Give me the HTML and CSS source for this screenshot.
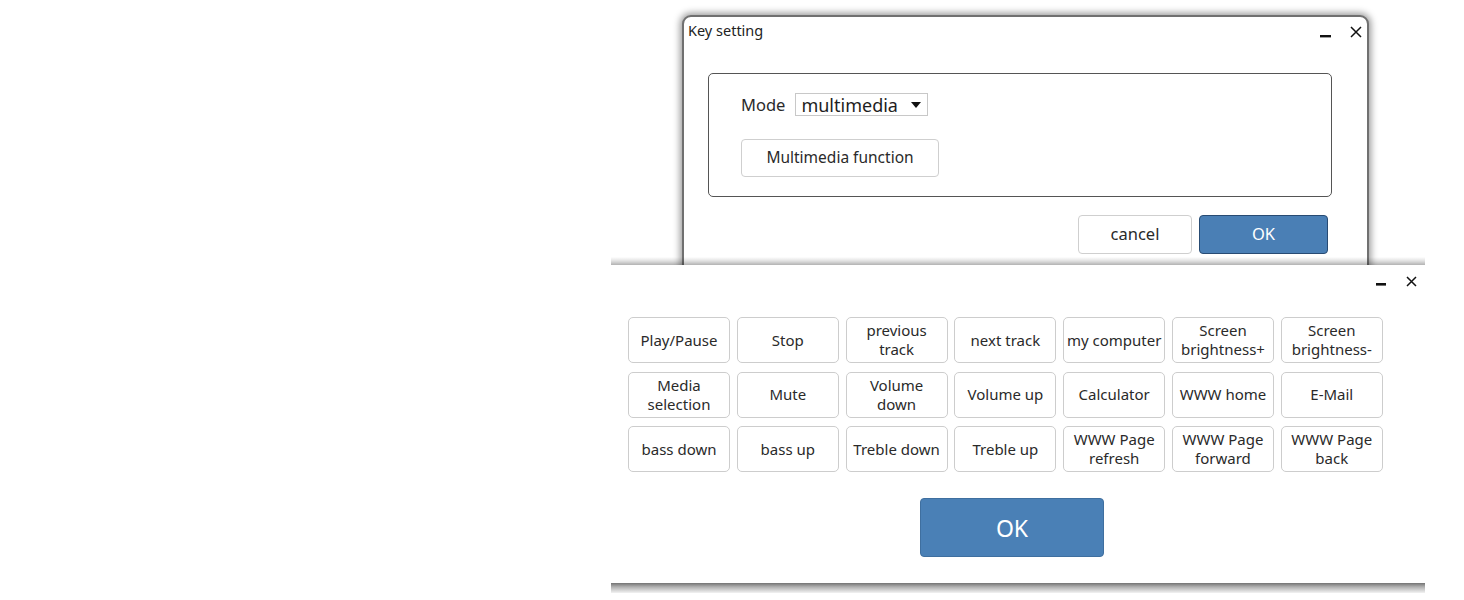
FILE: index.html
```html
<!DOCTYPE html>
<html>
<head>
<meta charset="utf-8">
<title>Key setting</title>
<link rel="stylesheet" href="styles.css">
</head>
<body>
<div class="desk">
  <div class="dialog">
    <div class="titlebar">
      <span class="title">Key setting</span>
      <div class="winctl">
        <svg class="ico-min" width="11" height="3" viewBox="0 0 11 3"><rect x="0" y="0" width="11" height="2.4" fill="#111"/></svg>
        <svg class="ico-close" width="12" height="12" viewBox="0 0 12 12"><path d="M1 1 L11 11 M11 1 L1 11" stroke="#111" stroke-width="1.5" fill="none"/></svg>
      </div>
    </div>
    <div class="modebox">
      <div class="moderow">
        <span class="modelabel">Mode</span>
        <div class="select">
          <span class="selval">multimedia</span>
          <svg class="caret" width="10" height="6" viewBox="0 0 10 6"><path d="M0 0 L10 0 L5 6 Z" fill="#111"/></svg>
        </div>
      </div>
      <button class="btn funcbtn">Multimedia function</button>
    </div>
    <div class="actions">
      <button class="btn cancelbtn">cancel</button>
      <button class="btn okbtn">OK</button>
    </div>
  </div>

  <div class="panel">
    <div class="panelbar">
      <svg class="ico-min2" width="10" height="3" viewBox="0 0 10 3"><rect x="0" y="0" width="10" height="2.6" fill="#111"/></svg>
      <svg class="ico-close2" width="11" height="11" viewBox="0 0 11 11"><path d="M1 1 L10 10 M10 1 L1 10" stroke="#111" stroke-width="1.5" fill="none"/></svg>
    </div>
    <div class="grid">
      <button class="key">Play/Pause</button>
      <button class="key">Stop</button>
      <button class="key">previous<br>track</button>
      <button class="key">next track</button>
      <button class="key">my computer</button>
      <button class="key">Screen<br>brightness+</button>
      <button class="key">Screen<br>brightness-</button>
      <button class="key">Media<br>selection</button>
      <button class="key">Mute</button>
      <button class="key">Volume<br>down</button>
      <button class="key">Volume up</button>
      <button class="key">Calculator</button>
      <button class="key">WWW home</button>
      <button class="key">E-Mail</button>
      <button class="key">bass down</button>
      <button class="key">bass up</button>
      <button class="key">Treble down</button>
      <button class="key">Treble up</button>
      <button class="key">WWW Page<br>refresh</button>
      <button class="key">WWW Page<br>forward</button>
      <button class="key">WWW Page<br>back</button>
    </div>
    <div class="okrow">
      <button class="bigok">OK</button>
    </div>
  </div>
</div>
</body>
</html>
```

FILE: styles.css
```css
* { box-sizing: border-box; }
html, body {
  margin: 0;
  padding: 0;
  background: #ffffff;
  font-family: "Noto Sans", "Open Sans", sans-serif;
  color: #2a2a2a;
}
.desk {
  position: relative;
  width: 1464px;
  height: 600px;
  overflow: hidden;
}
button {
  font-family: "Noto Sans", "Open Sans", sans-serif;
  color: #2a2a2a;
  background: #ffffff;
  margin: 0;
  padding: 0;
  cursor: default;
}

/* top dialog */
.dialog {
  position: absolute;
  left: 682px;
  top: 15px;
  width: 687px;
  height: 320px;
  border: 2px solid #707070;
  border-radius: 9px;
  background: #ffffff;
  box-shadow: 0 0 7px 2px rgba(0, 0, 0, 0.4);
  display: flex;
  flex-direction: column;
}
.titlebar {
  height: 27px;
  display: flex;
  align-items: center;
  justify-content: space-between;
  padding: 0 5px 0 4px;
}
.title {
  font-size: 14.5px;
  color: #222;
  line-height: 1;
}
.winctl {
  display: flex;
  align-items: center;
  gap: 19px;
  margin-top: 3px;
}
.ico-min { display: block; margin-top: 8px; }
.ico-close { display: block; }

.modebox {
  margin-top: 29px;
  margin-left: 24px;
  width: 624px;
  height: 124px;
  border: 1.5px solid #555555;
  border-radius: 5px;
  padding: 19px 0 0 32px;
  display: flex;
  flex-direction: column;
  align-items: flex-start;
}
.moderow {
  display: flex;
  align-items: center;
  gap: 10px;
}
.modelabel {
  font-size: 16.5px;
  color: #2a2a2a;
}
.select {
  width: 133px;
  height: 23px;
  border: 1px solid #c8c8c8;
  display: flex;
  align-items: center;
  justify-content: space-between;
  padding: 0 6px 0 5px;
}
.selval {
  font-size: 18px;
  line-height: 1;
  color: #1e1e1e;
}
.caret { display: block; }
.funcbtn {
  margin-top: 23px;
  width: 198px;
  height: 38px;
  border: 1px solid #cfcfcf;
  border-radius: 4px;
  font-size: 15.5px;
}
.actions {
  display: flex;
  justify-content: flex-end;
  gap: 7px;
  margin-top: 18px;
  width: 644px;
}
.btn { line-height: 1; }
.cancelbtn {
  width: 114px;
  height: 39px;
  border: 1px solid #cfcfcf;
  border-radius: 4px;
  font-size: 16.5px;
}
.okbtn {
  width: 129px;
  height: 39px;
  border: 1.5px solid #284b73;
  border-radius: 4px;
  background: #4a7fb5;
  color: #ffffff;
  font-size: 16.5px;
}

/* lower panel */
.panel {
  position: absolute;
  left: 611px;
  top: 265px;
  width: 814px;
  height: 318px;
  background: #ffffff;
  display: flex;
  flex-direction: column;
}
.panel::before {
  content: "";
  position: absolute;
  left: 0;
  right: 0;
  top: -8px;
  height: 8px;
  background: linear-gradient(to bottom, rgba(0,0,0,0) 0%, rgba(0,0,0,0.12) 50%, rgba(0,0,0,0.3) 100%);
}
.panel::after {
  content: "";
  position: absolute;
  left: 0;
  right: 0;
  bottom: -10px;
  height: 10px;
  background: linear-gradient(to bottom, rgba(0,0,0,0.55) 0%, rgba(0,0,0,0.3) 40%, rgba(0,0,0,0.05) 100%);
}
.panelbar {
  height: 52px;
  display: flex;
  justify-content: flex-end;
  align-items: flex-start;
  gap: 20px;
  padding: 11px 8px 0 0;
}
.ico-min2 { display: block; margin-top: 7px; }
.ico-close2 { display: block; }

.grid {
  margin-left: 17px;
  display: grid;
  grid-template-columns: repeat(7, 102px);
  grid-template-rows: 46px 46px 46px;
  column-gap: 6.8px;
  row-gap: 8.5px;
}
.key {
  border: 1px solid #cdcdcd;
  border-radius: 5px;
  font-size: 15px;
  line-height: 19px;
  white-space: nowrap;
  text-align: center;
  color: #2a2a2a;
}
.okrow {
  margin-top: 26px;
  padding-left: 309px;
}
.bigok {
  width: 184px;
  height: 59px;
  border: 1px solid #3f6f9f;
  border-radius: 4px;
  background: #4a80b6;
  color: #ffffff;
  font-size: 23px;
}
```
